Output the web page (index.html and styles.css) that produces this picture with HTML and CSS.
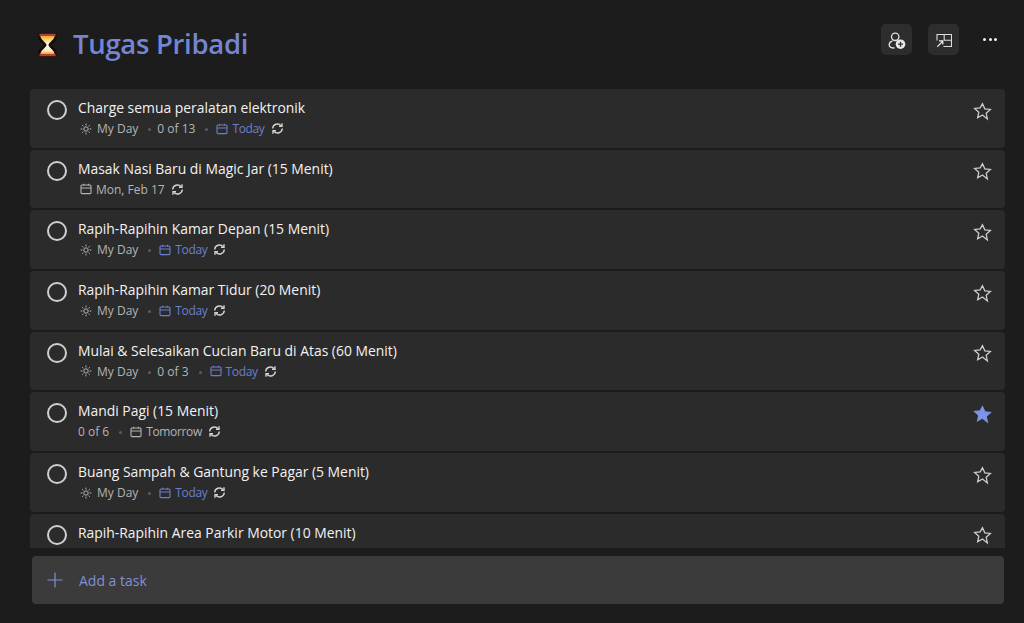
FILE: index.html
```html
<!DOCTYPE html>
<html lang="id">
<head>
<meta charset="utf-8">
<title>Tugas Pribadi</title>
<link rel="stylesheet" href="styles.css">
</head>
<body>
<svg class="defs" width="0" height="0" aria-hidden="true">
  <defs>
    <linearGradient id="sand" x1="0" y1="0" x2="0" y2="1"><stop offset="0" stop-color="#f7a532"/><stop offset=".5" stop-color="#fcd98a"/><stop offset="1" stop-color="#fff8ec"/></linearGradient>
    <linearGradient id="sand2" x1="0" y1="0" x2="0" y2="1"><stop offset="0" stop-color="#fffaf0"/><stop offset=".65" stop-color="#fde6bd"/><stop offset="1" stop-color="#ef9a3a"/></linearGradient>
  </defs>
  <symbol id="sun" viewBox="0 0 12 12"><g fill="none" stroke="currentColor" stroke-width="1"><circle cx="6" cy="6" r="2.2"/><path d="M6 .6v1.8M6 9.6v1.8M.6 6h1.800M9.600 6h1.800M2.200 2.200l1.200 1.200M8.600 8.600l1.200 1.200M2.200 9.800l1.200-1.200M8.600 3.400l1.200-1.200"/></g></symbol>
  <symbol id="cal" viewBox="0 0 12 12"><g fill="none" stroke="currentColor" stroke-width="1.100"><rect x="1" y="2" width="10" height="8.600" rx="1"/><path d="M1 5h10M3.600 .8v1.600M8.400 .8v1.600"/></g></symbol>
  <symbol id="rep" viewBox="0 0 13 13"><g fill="none" stroke="currentColor" stroke-width="1.400"><path d="M1.700 6.500A4.800 4.800 0 0 1 10 3.500"/><path d="M11.300 6.500A4.800 4.800 0 0 1 3 9.500"/><path d="M11 1.300v3h-3M2 11.700v-3h3"/></g></symbol>
  <symbol id="star" viewBox="0 0 18 18"><path d="M9 1.600l2.200 4.900 5.300.6-4 3.600 1.100 5.300L9 12.300l-4.600 2.700 1.100-5.300-4-3.600 5.300-.6z"/></symbol>
</svg>
<main class="app">
  <header class="top">
    <svg class="glass" viewBox="0 0 20 26" aria-hidden="true">
      <path d="M.5.500h19v5c0 3.500-4 5.500-6 7.500 2 2 6 4 6 7.500v5H.5v-5C.5 17 4.500 15 6.500 13c-2-2-6-4-6-7.500z" fill="#140c08"/>
      <path d="M2.500 3.500h15c0 4-6 6.500-6.500 9.500H9c-.5-3-6.500-5.500-6.500-9.500z" fill="url(#sand)"/>
      <path d="M9 13h2c.5 3 6.500 5.500 6.500 9.500h-15C2.500 18.500 8.500 16 9 13z" fill="url(#sand2)"/>
      <path d="M1.500 1.200h17v2.300h-17zM1.500 22.500h17v2.300h-17z" fill="#b8412e"/>
    </svg>
    <h1 class="title">Tugas Pribadi</h1>
    <div class="actions">
      <button class="tool" aria-label="Share">
        <svg viewBox="0 0 20 20" width="20" height="20" fill="none" stroke="#e4e4e4" stroke-width="1.300"><circle cx="8.200" cy="6.800" r="3.700"/><path d="M5.500 11.200c-2 .5-3.300 1.800-3.300 3.500 0 2 2 3.300 5.300 3.300"/><circle cx="13.500" cy="14.200" r="4.800" fill="#e8e8e8" stroke="none"/><path d="M13.500 11.700v5M11 14.200h5" stroke="#2d2d2d"/></svg>
      </button>
      <button class="tool" aria-label="Theme">
        <svg viewBox="0 0 16 14" width="16" height="14" fill="none" stroke="#dcdcdc" stroke-width="1.100"><path d="M1 7.500V1.500h14.500v12H7.500"/><path d="M8.200 1.500v5.800h7.300"/><path d="M1.300 13.700l5-5M3 7.800h3.800v3.800" stroke="#f0f0f0" stroke-width="1.200"/></svg>
      </button>
      <button class="more" aria-label="More"><i></i><i></i><i></i></button>
    </div>
  </header>

  <section class="list">
    <article class="task">
      <span class="check"></span>
      <div class="body">
        <p class="name">Charge semua peralatan elektronik</p>
        <p class="meta"><svg class="ic"><use href="#sun"/></svg><span>My Day</span><b class="dot"></b><span>0 of 13</span><b class="dot"></b><span class="due"><svg class="ic"><use href="#cal"/></svg>Today</span><svg class="ic rp"><use href="#rep"/></svg></p>
      </div>
      <svg class="star"><use href="#star"/></svg>
    </article>
    <article class="task">
      <span class="check"></span>
      <div class="body">
        <p class="name">Masak Nasi Baru di Magic Jar (15 Menit)</p>
        <p class="meta"><svg class="ic cal-first"><use href="#cal"/></svg><span>Mon, Feb 17</span><svg class="ic rp"><use href="#rep"/></svg></p>
      </div>
      <svg class="star"><use href="#star"/></svg>
    </article>
    <article class="task">
      <span class="check"></span>
      <div class="body">
        <p class="name">Rapih-Rapihin Kamar Depan (15 Menit)</p>
        <p class="meta"><svg class="ic"><use href="#sun"/></svg><span>My Day</span><b class="dot"></b><span class="due"><svg class="ic"><use href="#cal"/></svg>Today</span><svg class="ic rp"><use href="#rep"/></svg></p>
      </div>
      <svg class="star"><use href="#star"/></svg>
    </article>
    <article class="task">
      <span class="check"></span>
      <div class="body">
        <p class="name">Rapih-Rapihin Kamar Tidur (20 Menit)</p>
        <p class="meta"><svg class="ic"><use href="#sun"/></svg><span>My Day</span><b class="dot"></b><span class="due"><svg class="ic"><use href="#cal"/></svg>Today</span><svg class="ic rp"><use href="#rep"/></svg></p>
      </div>
      <svg class="star"><use href="#star"/></svg>
    </article>
    <article class="task">
      <span class="check"></span>
      <div class="body">
        <p class="name">Mulai &amp; Selesaikan Cucian Baru di Atas (60 Menit)</p>
        <p class="meta"><svg class="ic"><use href="#sun"/></svg><span>My Day</span><b class="dot"></b><span>0 of 3</span><b class="dot"></b><span class="due"><svg class="ic"><use href="#cal"/></svg>Today</span><svg class="ic rp"><use href="#rep"/></svg></p>
      </div>
      <svg class="star"><use href="#star"/></svg>
    </article>
    <article class="task">
      <span class="check"></span>
      <div class="body">
        <p class="name">Mandi Pagi (15 Menit)</p>
        <p class="meta flush"><span>0 of 6</span><b class="dot"></b><span class="due muted"><svg class="ic"><use href="#cal"/></svg>Tomorrow</span><svg class="ic rp"><use href="#rep"/></svg></p>
      </div>
      <svg class="star on"><use href="#star"/></svg>
    </article>
    <article class="task">
      <span class="check"></span>
      <div class="body">
        <p class="name">Buang Sampah &amp; Gantung ke Pagar (5 Menit)</p>
        <p class="meta"><svg class="ic"><use href="#sun"/></svg><span>My Day</span><b class="dot"></b><span class="due"><svg class="ic"><use href="#cal"/></svg>Today</span><svg class="ic rp"><use href="#rep"/></svg></p>
      </div>
      <svg class="star"><use href="#star"/></svg>
    </article>
    <article class="task">
      <span class="check"></span>
      <div class="body">
        <p class="name">Rapih-Rapihin Area Parkir Motor (10 Menit)</p>
      </div>
      <svg class="star"><use href="#star"/></svg>
    </article>
  </section>

  <div class="add">
    <svg viewBox="0 0 16 16" width="16" height="16" fill="none" stroke="#7f90d8" stroke-width="1.200"><path d="M8 .5v15M.5 8h15"/></svg>
    <span>Add a task</span>
  </div>
</main>
</body>
</html>
```
FILE: styles.css
```css
* { box-sizing: border-box; }
html, body { margin: 0; height: 100%; }
body {
  background: #1c1c1c;
  color: #f0f0f0;
  font-family: "Open Sans", "Noto Sans", "Liberation Sans", sans-serif;
  overflow: hidden;
}
.defs { display: block; height: 0; }
.app { height: 623px; display: flex; flex-direction: column; padding: 0 19px 19px 30px; }
.top { height: 89px; flex: none; display: flex; align-items: flex-start; padding: 24px 0 0 8px; }
.glass { width: 19px; height: 26px; margin: 8px 16px 0 0; flex: none; }
.title { margin: 0; font-size: 27.500px; line-height: 40px; font-weight: 600; color: #7386d5; letter-spacing: -0.300px; }
.actions { margin-left: auto; display: flex; align-items: center; gap: 16px; }
.tool { width: 31px; height: 31px; padding: 0; border: 0; border-radius: 5px; background: #2d2d2d; display: flex; align-items: center; justify-content: center; }
.more { width: 30px; height: 31px; padding: 0; border: 0; background: none; display: flex; align-items: center; justify-content: center; gap: 2.500px; }
.more i { width: 3px; height: 3px; border-radius: 50%; background: #f0f0f0; }
.list { height: 459px; flex: none; display: flex; flex-direction: column; gap: 2px; overflow: hidden; }
.task { flex: none; height: 58.700px; background: #2b2b2b; border-radius: 4px; display: flex; padding: 10px 13px 0 17px; }
.check { width: 20px; height: 20px; border: 2px solid #cfcfcf; border-radius: 50%; flex: none; margin: 1px 11px 0 0; }
.body { flex: 1; min-width: 0; }
.name { margin: 0; font-size: 13.900px; line-height: 18px; color: #f2f2f2; }
.meta { margin: 3px 0 0 2px; height: 17px; display: flex; align-items: center; font-size: 12px; color: #b4b4b4; }
.meta.flush { margin-left: 0; }
.ic { width: 12px; height: 12px; margin-right: 5px; flex: none; color: #b4b4b4; }
.ic.cal-first { margin-right: 4px; }
.rp { margin: 0 0 0 6px; width: 13px; height: 13px; color: #d4d4d4; }
.due { display: flex; align-items: center; color: #6c7fcb; margin-left: 2px; letter-spacing: -0.350px; }
.due .ic { color: #6c7fcb; margin-right: 4px; }
.due.muted { color: #b4b4b4; }
.due.muted .ic { color: #b4b4b4; }
.dot { width: 3px; height: 3px; border-radius: 50%; background: #5c5c5c; margin: 2px 6px 0 10px; flex: none; }
.star { width: 19px; height: 19px; flex: none; margin-top: 2.500px; fill: none; stroke: #cfcfcf; stroke-width: 1.200; }
.star.on { fill: #7d93e6; stroke: #7d93e6; }
.add { height: 48px; flex: none; margin: 8px 1px 0 2px; background: #3b3b3b; border-radius: 4px; display: flex; align-items: center; gap: 16px; padding-left: 15px; font-size: 14px; color: #7f90d8; }
```
